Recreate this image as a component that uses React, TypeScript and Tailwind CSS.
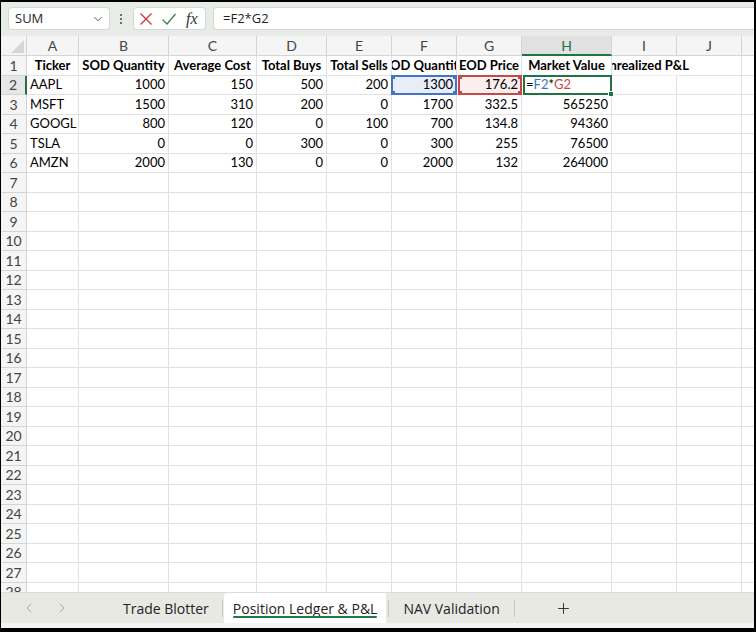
import { ChevronDown, ChevronLeft, ChevronRight, Plus } from "lucide-react"

const cols = [
  { k: "A", w: "w-[52px]" },
  { k: "B", w: "w-[90px]" },
  { k: "C", w: "w-[88px]" },
  { k: "D", w: "w-[70px]" },
  { k: "E", w: "w-[65px]" },
  { k: "F", w: "w-[65px]" },
  { k: "G", w: "w-[65px]" },
  { k: "H", w: "w-[90px]" },
  { k: "I", w: "w-[65px]" },
  { k: "J", w: "w-[65px]" },
]

const headers = ["Ticker", "SOD Quantity", "Average Cost", "Total Buys", "Total Sells", "EOD Quantity", "EOD Price", "Market Value", "Unrealized P&L"]

const data: string[][] = [
  ["AAPL", "1000", "150", "500", "200", "1300", "176.2", ""],
  ["MSFT", "1500", "310", "200", "0", "1700", "332.5", "565250"],
  ["GOOGL", "800", "120", "0", "100", "700", "134.8", "94360"],
  ["TSLA", "0", "0", "300", "0", "300", "255", "76500"],
  ["AMZN", "2000", "130", "0", "0", "2000", "132", "264000"],
]

function Corners({ color }: { color: string }) {
  return (
    <>
      <span className={`absolute -left-[2px] -top-[2px] w-[4px] h-[4px] ${color}`} />
      <span className={`absolute -right-[2px] -top-[2px] w-[4px] h-[4px] ${color}`} />
      <span className={`absolute -left-[2px] -bottom-[2px] w-[4px] h-[4px] ${color}`} />
      <span className={`absolute -right-[2px] -bottom-[2px] w-[4px] h-[4px] ${color}`} />
    </>
  )
}

function HeaderRow() {
  return (
    <div className="flex h-[20px] shrink-0 bg-[#f5f5f5] text-[#444] text-[14px]">
      <div className="w-[26px] shrink-0 border-r border-b border-[#d4d4d4] relative">
        <svg className="absolute right-[2px] bottom-[2px]" width="13" height="13" viewBox="0 0 13 13">
          <polygon points="13,0 13,13 0,13" fill="#d6d6d6" />
        </svg>
      </div>
      {cols.map((c) => (
        <div
          key={c.k}
          className={`${c.w} shrink-0 flex items-center justify-center border-r ${
            c.k === "H" ? "bg-[#e1e1e1] text-[#217346] border-b-2 border-b-[#217346] border-r-[#d4d4d4]" : "border-b border-[#d4d4d4]"
          }`}
        >
          {c.k}
        </div>
      ))}
      <div className="flex-1 border-b border-[#d4d4d4]" />
    </div>
  )
}

function Row1() {
  return (
    <div className="flex h-[19.5px] shrink-0 font-bold text-[13px] text-black">
      <div className="w-[26px] shrink-0 flex items-center justify-center bg-[#f5f5f5] border-r border-b border-[#d4d4d4] font-normal text-[14px] text-[#444]">1</div>
      {cols.map((c, i) => {
        const t = headers[i]
        if (c.k === "I")
          return (
            <div key={c.k} className={`${c.w} shrink-0 flex items-center justify-center border-b border-[#e1e1e1] whitespace-nowrap [clip-path:inset(0_-300px_0_0)]`}>
              <span className="shrink-0">{t}</span>
            </div>
          )
        return (
          <div key={c.k} className={`${c.w} shrink-0 flex items-center justify-center overflow-hidden whitespace-nowrap border-r border-b border-[#e1e1e1]`}>
            <span className="shrink-0">{t ?? ""}</span>
          </div>
        )
      })}
      <div className="flex-1 border-b border-[#e1e1e1]" />
    </div>
  )
}

function DataRow({ n, vals }: { n: number; vals: string[] }) {
  const sel = n === 2
  return (
    <div className="flex h-[19.5px] shrink-0 text-[13px] text-black">
      <div
        className={`w-[26px] shrink-0 flex items-center justify-center border-b border-[#d4d4d4] text-[14px] text-[#444] ${
          sel ? "bg-[#e6e6e6] border-r-2 border-r-[#217346]" : "bg-[#f5f5f5] border-r"
        }`}
      >
        {n}
      </div>
      {cols.map((c, i) => {
        const v = vals[i] ?? ""
        const right = i > 0
        if (sel && c.k === "F")
          return (
            <div key={c.k} className={`${c.w} shrink-0 relative flex items-center justify-end pr-[3px] bg-[#e8eef9] border-r border-b border-[#e1e1e1]`}>
              {v}
              <div className="absolute -left-[1px] -top-[1px] -right-[1px] -bottom-[1px] border-2 border-[#4472c4] z-10">
                <Corners color="bg-[#4472c4]" />
              </div>
            </div>
          )
        if (sel && c.k === "G")
          return (
            <div key={c.k} className={`${c.w} shrink-0 relative flex items-center justify-end pr-[3px] bg-[#fbeeee] border-r border-b border-[#e1e1e1]`}>
              {v}
              <div className="absolute left-[1px] -top-[1px] -right-[1px] -bottom-[1px] border-2 border-[#c8484a] z-10">
                <Corners color="bg-[#c8484a]" />
              </div>
            </div>
          )
        if (sel && c.k === "H")
          return (
            <div key={c.k} className={`${c.w} shrink-0 relative flex items-center pl-[4px] border-r border-b border-[#e1e1e1]`}>
              <span>=</span>
              <span className="text-[#3f6fc6]">F2</span>
              <span>*</span>
              <span className="text-[#c8484a]">G2</span>
              <div className="absolute left-[1px] -top-[1px] -right-[1px] -bottom-[1px] border-2 border-[#217346] z-10">
                <span className="absolute -right-[4px] -bottom-[4px] w-[6px] h-[6px] bg-[#217346] border border-white" />
              </div>
            </div>
          )
        return (
          <div
            key={c.k}
            className={`${c.w} shrink-0 flex items-center overflow-hidden whitespace-nowrap border-r border-b border-[#e1e1e1] ${
              right ? "justify-end pr-[3px]" : "justify-start pl-[3px]"
            }`}
          >
            {v}
          </div>
        )
      })}
      <div className="flex-1 border-b border-[#e1e1e1]" />
    </div>
  )
}

export default function App() {
  const empty: number[] = []
  for (let i = 7; i <= 30; i++) empty.push(i)

  return (
    <div className="w-[756px] h-[632px] bg-black pt-[2px] pl-[1px] pr-[2px] pb-[4px] flex flex-col overflow-hidden [font-family:Lato,'Liberation_Sans',sans-serif]">
      {/* formula bar */}
      <div className="h-[34px] shrink-0 bg-[#e8ece7] flex items-start pt-[5px] [font-family:'Open_Sans','Liberation_Sans',sans-serif] text-[13px] text-[#1f1f1f]">
        <div className="ml-[7px] w-[102px] h-[23px] rounded-[4px] bg-white border border-[#d4d8d3] flex items-center pl-[6px] pr-[4px]">
          <span className="flex-1">SUM</span>
          <ChevronDown size={14} strokeWidth={1.5} className="text-[#444]" />
        </div>
        <div className="w-[22px] h-[23px] flex flex-col items-center justify-center gap-[2px]">
          <span className="w-[2px] h-[2px] bg-[#444] rounded-full" />
          <span className="w-[2px] h-[2px] bg-[#444] rounded-full" />
          <span className="w-[2px] h-[2px] bg-[#444] rounded-full" />
        </div>
        <div className="ml-[1px] w-[73px] h-[23px] rounded-[4px] bg-white border border-[#d4d8d3] flex items-center">
          <svg className="ml-[5px]" width="14" height="14" viewBox="0 0 14 14">
            <path d="M1.5 1.5 L12.5 12.5 M12.5 1.5 L1.5 12.5" stroke="#d13438" strokeWidth="1.3" fill="none" />
          </svg>
          <svg className="ml-[8px]" width="16" height="14" viewBox="0 0 16 14">
            <path d="M1.5 7.5 L6 12 L14.5 2" stroke="#2e8b3e" strokeWidth="1.3" fill="none" />
          </svg>
          <span className="ml-[9px] italic text-[16px] text-[#333] [font-family:'Liberation_Serif',serif] leading-none">fx</span>
        </div>
        <div className="ml-[7px] flex-1 h-[23px] rounded-l-[4px] bg-white border border-r-0 border-[#d4d8d3] flex items-center pl-[9px]">
          =F2*G2
        </div>
      </div>

      {/* grid */}
      <div className="flex-1 min-h-0 bg-white flex flex-col overflow-hidden">
        <HeaderRow />
        <Row1 />
        {data.map((r, i) => (
          <DataRow key={i} n={i + 2} vals={r} />
        ))}
        {empty.map((n) => (
          <DataRow key={n} n={n} vals={[]} />
        ))}
      </div>

      {/* sheet tabs */}
      <div className="h-[31px] shrink-0 bg-[#e9e9e4] border-t border-[#dcdcd6] flex items-stretch [font-family:'Open_Sans','Liberation_Sans',sans-serif] text-[14px] text-[#242424]">
        <div className="w-[109px] shrink-0 flex items-center">
          <ChevronLeft size={16} strokeWidth={1.3} className="ml-[20px] text-[#9a9a9a]" />
          <ChevronRight size={16} strokeWidth={1.3} className="ml-[17px] text-[#9a9a9a]" />
        </div>
        <div className="px-[13px] flex items-center">Trade Blotter</div>
        <div className="w-px h-[17px] self-center bg-[#c8c8c2]" />
        <div className="ml-[1px] px-[9px] bg-white rounded-tl-[4px] flex items-center relative">
          Position Ledger &amp; P&amp;L
          <span className="absolute left-[9px] right-[9px] bottom-[5px] h-[2px] bg-[#1e7a45] rounded" />
        </div>
        <div className="ml-[2px] w-px h-[17px] self-center bg-[#c8c8c2]" />
        <div className="px-[14px] flex items-center">NAV Validation</div>
        <div className="w-px h-[17px] self-center bg-[#c8c8c2]" />
        <div className="ml-[40px] flex items-center">
          <Plus size={17} strokeWidth={1.4} className="text-[#333]" />
        </div>
      </div>
      <div className="h-[5px] shrink-0 bg-[#f4f4f4]" />
    </div>
  )
}
